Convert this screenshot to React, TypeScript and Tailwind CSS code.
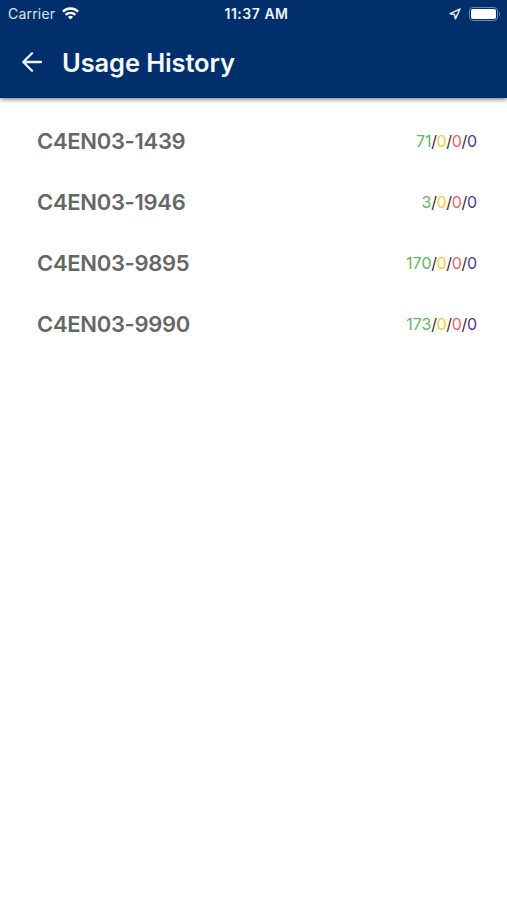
const rows = [
  { name: 'C4EN03-1439', n: '71' },
  { name: 'C4EN03-1946', n: '3' },
  { name: 'C4EN03-9895', n: '170' },
  { name: 'C4EN03-9990', n: '173' },
];

function Slash() {
  return <span className="-mx-[0.35px] text-[#333]">/</span>;
}

export default function App() {
  return (
    <div className="h-[900px] w-[507px] overflow-hidden bg-white font-['Inter',sans-serif]">
      <header className="h-[98px] bg-[#002f6c] text-white shadow-[0_1px_5px_rgba(0,0,0,0.6)]">
        <div className="grid h-[27px] grid-cols-3 items-center pr-1.5 pl-2">
          <div className="flex items-center gap-[7px]">
            <span className="text-[14px] tracking-[0.2px] text-[#dce6f3]">Carrier</span>
            <svg width="17" height="13" viewBox="0 0 17 13" fill="none" stroke="white" strokeWidth="2.4">
              <path d="M.9 4.700a10.800 10.800 0 0 1 15.200 0M3.600 7.900a6.900 6.900 0 0 1 9.800 0" />
              <path d="M8.500 12.600 5.900 10a3.800 3.800 0 0 1 5.200 0z" fill="white" stroke="none" />
            </svg>
          </div>
          <span className="pl-1 text-center text-[14px] font-semibold tracking-[0.52px] whitespace-nowrap text-[#eef4fb]">11:37 AM</span>
          <div className="flex items-center justify-end gap-2">
            <svg width="12" height="12" viewBox="0 0 12 12" fill="none" stroke="#dce6f3" strokeWidth="1.6" strokeLinejoin="round">
              <path d="M11 1 1.200 5.600l4.300.9.900 4.300z" />
            </svg>
            <svg width="32" height="14" viewBox="0 0 32 14">
              <rect x=".5" y=".5" width="28" height="13" rx="3.500" fill="none" stroke="#6b88b0" />
              <rect x="2" y="2" width="25" height="10" rx="2" fill="white" />
              <path d="M30 4.500q2 2.500 0 5z" fill="#6b88b0" />
            </svg>
          </div>
        </div>
        <div className="flex h-[71px] items-center gap-5 pb-px pl-[22px]">
          <svg width="20" height="20" viewBox="0 0 20 20" fill="none" stroke="#eef4fb" strokeWidth="2.300" strokeLinecap="round" strokeLinejoin="round">
            <path d="M19 10H1.500M10 1.300 1.300 10l8.700 8.700" />
          </svg>
          <h1 className="pt-0.5 text-[25.5px] leading-8 font-semibold tracking-[-0.12px] text-[#f5f8fd]">Usage History</h1>
        </div>
      </header>
      <main className="pt-[13px]">
        {rows.map((r) => (
          <div key={r.name} className="flex h-[61px] items-center justify-between pr-[30px] pl-[37px]">
            <span className="text-[22px] font-semibold tracking-[-0.3px] text-[#666]">{r.name}</span>
            <span className="pb-0.5 text-[16px]">
              <span className="text-[#5cb860]">{r.n}</span>
              <Slash />
              <span className="text-[#fcc934]">0</span>
              <Slash />
              <span className="text-[#f25f55]">0</span>
              <Slash />
              <span className="text-[#5731a0]">0</span>
            </span>
          </div>
        ))}
      </main>
    </div>
  );
}
